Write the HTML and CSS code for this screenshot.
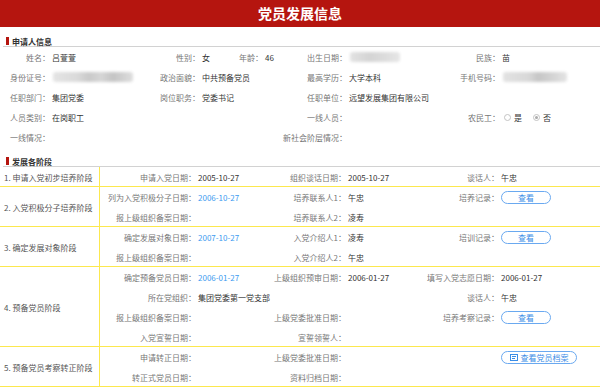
FILE: index.html
```html
<!DOCTYPE html>
<html lang="zh-CN">
<head>
    <meta charset="UTF-8">
    <meta name="viewport" content="width=device-width, initial-scale=1.0">
    <title>党员发展信息</title>
    <link rel="stylesheet" href="styles.css">
</head>
<body>
    <div class="header">党员发展信息</div>

    <div class="section-title">申请人信息</div>
    <div class="info-grid">
        <div class="field"><span class="label">姓名：</span><span class="value">吕萱萱</span></div>
        <div class="field"><span class="label">性别：</span><span class="value">女</span><span class="sub-label">年龄：</span><span class="value">46</span></div>
        <div class="field"><span class="label">出生日期：</span><span class="blur blur-date"></span></div>
        <div class="field"><span class="label">民族：</span><span class="value">苗</span></div>

        <div class="field"><span class="label">身份证号：</span><span class="blur blur-id"></span></div>
        <div class="field"><span class="label">政治面貌：</span><span class="value">中共预备党员</span></div>
        <div class="field"><span class="label">最高学历：</span><span class="value">大学本科</span></div>
        <div class="field"><span class="label">手机号码：</span><span class="blur blur-phone"></span></div>

        <div class="field"><span class="label">任职部门：</span><span class="value">集团党委</span></div>
        <div class="field"><span class="label">岗位职务：</span><span class="value">党委书记</span></div>
        <div class="field"><span class="label">任职单位：</span><span class="value">远望发展集团有限公司</span></div>
        <div class="field"></div>

        <div class="field"><span class="label">人员类别：</span><span class="value">在岗职工</span></div>
        <div class="field"></div>
        <div class="field"><span class="label">一线人员：</span></div>
        <div class="field">
            <span class="label">农民工：</span>
            <span class="radio"></span><span class="radio-text">是</span>
            <span class="radio checked"></span><span class="radio-text">否</span>
        </div>

        <div class="field"><span class="label">一线情况：</span></div>
        <div class="field"></div>
        <div class="field"><span class="label">新社会阶层情况：</span></div>
        <div class="field"></div>
    </div>

    <div class="section-title">发展各阶段</div>
    <div class="stages">
        <div class="stage">
            <div class="stage-name">1. 申请入党初步培养阶段</div>
            <div class="stage-body">
                <div class="field"><span class="label">申请入党日期：</span><span class="value">2005-10-27</span></div>
                <div class="field"><span class="label">组织谈话日期：</span><span class="value">2005-10-27</span></div>
                <div class="field"><span class="label">谈话人：</span><span class="value">午忠</span></div>
            </div>
        </div>

        <div class="stage">
            <div class="stage-name">2. 入党积极分子培养阶段</div>
            <div class="stage-body">
                <div class="field"><span class="label">列为入党积极分子日期：</span><span class="value link">2006-10-27</span></div>
                <div class="field"><span class="label">培养联系人1：</span><span class="value">午忠</span></div>
                <div class="field"><span class="label">培养记录：</span><span class="btn">查看</span></div>
                <div class="field"><span class="label">报上级组织备案日期：</span></div>
                <div class="field"><span class="label">培养联系人2：</span><span class="value">凌寿</span></div>
                <div class="field"></div>
            </div>
        </div>

        <div class="stage">
            <div class="stage-name">3. 确定发展对象阶段</div>
            <div class="stage-body">
                <div class="field"><span class="label">确定发展对象日期：</span><span class="value link">2007-10-27</span></div>
                <div class="field"><span class="label">入党介绍人1：</span><span class="value">凌寿</span></div>
                <div class="field"><span class="label">培训记录：</span><span class="btn">查看</span></div>
                <div class="field"><span class="label">报上级组织备案日期：</span></div>
                <div class="field"><span class="label">入党介绍人2：</span><span class="value">午忠</span></div>
                <div class="field"></div>
            </div>
        </div>

        <div class="stage">
            <div class="stage-name">4. 预备党员阶段</div>
            <div class="stage-body">
                <div class="field"><span class="label">确定预备党员日期：</span><span class="value link">2006-01-27</span></div>
                <div class="field"><span class="label">上级组织预审日期：</span><span class="value">2006-01-27</span></div>
                <div class="field"><span class="label">填写入党志愿日期：</span><span class="value">2006-01-27</span></div>
                <div class="field"><span class="label">所在党组织：</span><span class="value">集团党委第一党支部</span></div>
                <div class="field"></div>
                <div class="field"><span class="label">谈话人：</span><span class="value">午忠</span></div>
                <div class="field"><span class="label">报上级组织备案日期：</span></div>
                <div class="field"><span class="label">上级党委批准日期：</span></div>
                <div class="field"><span class="label">培养考察记录：</span><span class="btn">查看</span></div>
                <div class="field"><span class="label">入党宣誓日期：</span></div>
                <div class="field"><span class="label">宣誓领誓人：</span></div>
                <div class="field"></div>
            </div>
        </div>

        <div class="stage">
            <div class="stage-name">5. 预备党员考察转正阶段</div>
            <div class="stage-body">
                <div class="field"><span class="label">申请转正日期：</span></div>
                <div class="field"><span class="label">上级党委批准日期：</span></div>
                <div class="field">
                    <span class="label"></span>
                    <span class="btn btn-wide">
                        <svg class="btn-icon" width="8" height="7" viewBox="0 0 8 7">
                            <rect x="0.5" y="0.5" width="7" height="6" fill="none" stroke="#3b8de6"/>
                            <line x1="2" y1="2.5" x2="6" y2="2.5" stroke="#3b8de6"/>
                            <line x1="2" y1="4.5" x2="5" y2="4.5" stroke="#3b8de6"/>
                        </svg>查看党员档案
                    </span>
                </div>
                <div class="field"><span class="label">转正式党员日期：</span></div>
                <div class="field"><span class="label">资料归档日期：</span></div>
                <div class="field"></div>
            </div>
        </div>
    </div>
</body>
</html>
```

FILE: styles.css
```css
body {
    margin: 0;
    font-family: "Noto Sans CJK SC", "Noto Sans", sans-serif;
    font-size: 8px;
    color: #333;
    background-color: #fff;
}

.header {
    height: 27px;
    line-height: 27px;
    background-color: #b5150f;
    color: #fff;
    text-align: center;
    font-size: 14px;
    font-weight: bold;
}

.section-title {
    display: flex;
    align-items: center;
    margin: 9px 0 0 3px;
    height: 10px;
    padding-left: 3px;
    border-bottom: 1px solid #d2d2d2;
    font-weight: bold;
    color: #333;
}

.section-title::before {
    content: "";
    width: 3px;
    height: 8px;
    margin-right: 3px;
    background-color: #b5150f;
}

.info-grid {
    display: grid;
    grid-template-columns: 150px 147px 153px 150px;
    grid-auto-rows: 20px;
}

.field {
    display: flex;
    align-items: center;
    white-space: nowrap;
}

.label {
    flex: none;
    width: 50px;
    display: flex;
    justify-content: flex-end;
    color: #777;
}

.value {
    margin-left: 2px;
    color: #333;
}

.sub-label {
    margin-left: 29px;
    color: #777;
}

.link {
    color: #3c9bf0;
}

.blur {
    margin-left: 3px;
    height: 10px;
    border-radius: 3px;
    filter: blur(1.5px);
}

.blur-id {
    width: 80px;
    background: linear-gradient(90deg, #e4e4e4 0%, #dadada 30%, #c9c9c9 45%, #d6d6d6 60%, #c4c4c4 75%, #dedede 100%);
}

.blur-date {
    width: 50px;
    background: linear-gradient(90deg, #e2e2e2 0%, #d4d4d4 40%, #dcdcdc 70%, #e6e6e6 100%);
}

.blur-phone {
    width: 64px;
    background: linear-gradient(90deg, #e2e2e2 0%, #d8d8d8 40%, #c6c6c6 55%, #d2d2d2 75%, #e4e4e4 100%);
}

.radio {
    box-sizing: border-box;
    width: 7px;
    height: 7px;
    margin-left: 4px;
    border: 1px solid #c4c4c4;
    border-radius: 50%;
    display: flex;
    align-items: center;
    justify-content: center;
}

.radio.checked::after {
    content: "";
    width: 3px;
    height: 3px;
    border-radius: 50%;
    background-color: #aaa;
}

.radio-text {
    margin-left: 3px;
    margin-right: 7px;
    color: #333;
}

.stage {
    display: grid;
    grid-template-columns: 100px 1fr;
    box-shadow: inset 0 -1px 0 #fce84e;
}

.stage-name {
    display: flex;
    align-items: center;
    padding-left: 4px;
    border-right: 1px solid #fce84e;
    color: #555;
    white-space: nowrap;
}

.stage-body {
    display: grid;
    grid-template-columns: 196px 153px 150px;
    grid-auto-rows: 20px;
}

.stage-body .field:nth-child(3n+1) .label {
    width: 96px;
}

.btn {
    box-sizing: border-box;
    display: inline-flex;
    align-items: center;
    justify-content: center;
    width: 50px;
    height: 13px;
    margin-left: 2px;
    border: 1px solid #6aa9f0;
    border-radius: 7px;
    color: #3b8de6;
}

.btn-wide {
    width: 76px;
}

.btn-icon {
    margin-right: 3px;
}
```
